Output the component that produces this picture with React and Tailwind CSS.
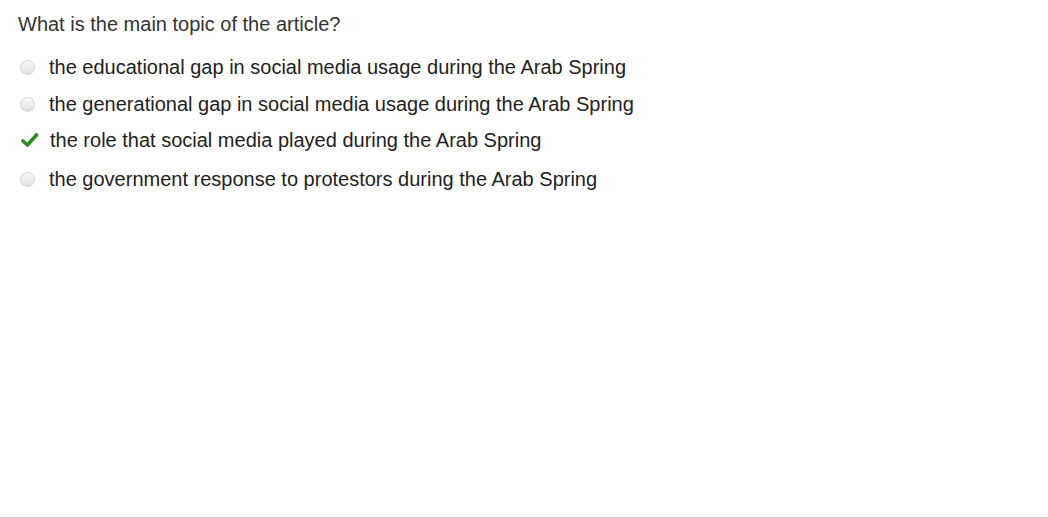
import React from 'react';

const options = [
  { text: 'the educational gap in social media usage during the Arab Spring', checked: false, gap: 'mt-0' },
  { text: 'the generational gap in social media usage during the Arab Spring', checked: false, gap: 'mt-[1px]' },
  { text: 'the role that social media played during the Arab Spring', checked: true, gap: 'mt-0' },
  { text: 'the government response to protestors during the Arab Spring', checked: false, gap: 'mt-[3px]' },
];

const Radio = () => (
  <span className="block ml-[2px] w-[15px] h-[15px] rounded-full border border-[#d6d6d6] bg-gradient-to-b from-[#f8f8f8] to-[#e0e0e0]"></span>
);

const Check = () => (
  <svg className="ml-[3px]" width="18" height="15" viewBox="0 0 18 15">
    <path d="M2 8 L6.5 12 L15.5 2" fill="none" stroke="#2b8c20" strokeWidth="3.6" strokeLinecap="round" strokeLinejoin="round" />
  </svg>
);

const App = () => {
  return (
    <div className="w-[1048px] h-[518px] bg-white border-b border-[#c8c8c8] font-['Liberation_Sans',Arial,sans-serif] text-[#222]">
      <div className="pl-[18px] pt-[11px]">
        <p className="text-[20px] leading-[26px] text-[#333]">What is the main topic of the article?</p>
        <div className="mt-[12px] flex flex-col">
          {options.map((o, i) => (
            <div key={i} className={`flex items-center h-[36px] ${o.gap}`}>
              <div className="w-[31px] flex items-center">
                {o.checked ? <Check /> : <Radio />}
              </div>
              <span className={`text-[20px] ${o.checked ? 'ml-[1px]' : ''}`}>{o.text}</span>
            </div>
          ))}
        </div>
      </div>
    </div>
  );
};

export default App;
